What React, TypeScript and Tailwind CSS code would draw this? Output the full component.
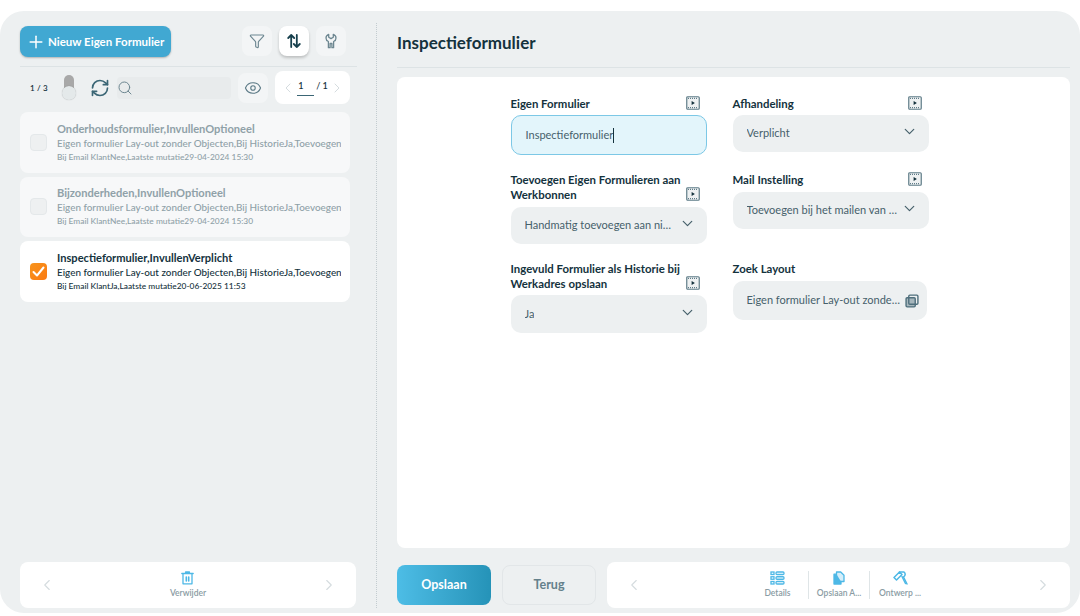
import { ChevronDown, ChevronLeft, ChevronRight, Eye, Funnel, Plus, RefreshCw, Search } from 'lucide-react'

const cards = [
  { title: 'Onderhoudsformulier,InvullenOptioneel', sub: 'Eigen formulier Lay-out zonder Objecten,Bij HistorieJa,Toevoegen Werkbonnen', meta: 'Bij Email KlantNee,Laatste mutatie29-04-2024 15:30', active: false },
  { title: 'Bijzonderheden,InvullenOptioneel', sub: 'Eigen formulier Lay-out zonder Objecten,Bij HistorieJa,Toevoegen Werkbonnen', meta: 'Bij Email KlantNee,Laatste mutatie29-04-2024 15:30', active: false },
  { title: 'Inspectieformulier,InvullenVerplicht', sub: 'Eigen formulier Lay-out zonder Objecten,Bij HistorieJa,Toevoegen Werkbonnen', meta: 'Bij Email KlantJa,Laatste mutatie20-06-2025 11:53', active: true },
]

function FilmIcon() {
  return (
    <svg width="14" height="14" viewBox="0 0 14 14" fill="none" className="shrink-0 text-[#5f7c88]">
      <rect x="0.75" y="0.75" width="12.5" height="12.5" rx="1" fill="#eef1f2" stroke="currentColor" strokeWidth="1.2" />
      <path d="M2 2.4h10M2 11.6h10" stroke="currentColor" strokeWidth="1.1" strokeDasharray="1 1" />
      <path d="M5.6 5.1 8.9 7 5.6 8.9Z" fill="#14323d" />
    </svg>
  )
}

function SortIcon() {
  return (
    <svg width="16" height="16" viewBox="0 0 16 16" fill="none" stroke="#17404d" strokeWidth="1.8" strokeLinecap="round" strokeLinejoin="round">
      <path d="M5.2 14V2M2.2 5l3-3 3 3" />
      <path d="M10.8 2v12M7.8 11l3 3 3-3" />
    </svg>
  )
}

function WrenchIcon() {
  return (
    <svg width="12" height="16" viewBox="0 0 12 16" fill="none" stroke="#6d8791" strokeWidth="1.3" strokeLinecap="round" strokeLinejoin="round">
      <path d="M3.700 1.300C2 1.900 1 3.300 1 5c0 1.600.9 2.900 2.400 3.500v6.200h1.700v-4.200h1.800v4.200h1.700V8.500C10.100 7.900 11 6.600 11 5c0-1.700-1-3.100-2.700-3.700v2.900L6 5.600 3.700 4.200Z" />
    </svg>
  )
}

function FieldLabel({ lines, icon = true }: { lines: string[]; icon?: boolean }) {
  return (
    <div className="flex items-end justify-between pr-[7px]">
      <div className="text-[11.4px] leading-[15px] font-bold text-[#14323d]">
        {lines.map((line) => (
          <div key={line}>{line}</div>
        ))}
      </div>
      {icon && <div className="mb-px"><FilmIcon /></div>}
    </div>
  )
}

function SelectBox({ value, h = 'h-[37px]', className = '' }: { value: string; h?: string; className?: string }) {
  return (
    <div className={`flex items-center justify-between rounded-[10px] bg-[#edf0f1] pl-[14px] pr-[11px] ${h} ${className}`}>
      <span className="truncate text-[11px] text-[#46606b]">{value}</span>
      <ChevronDown className="mb-[4px] ml-[2px] h-[17px] w-[17px] shrink-0 text-[#46606b]" strokeWidth={1.7} />
    </div>
  )
}

function BarAction({ label, icon, border }: { label: string; icon: React.ReactNode; border?: boolean }) {
  return (
    <div className={`flex h-[28px] w-[61px] flex-col items-center justify-between ${border ? 'border-l border-[#dfe5e7]' : ''}`}>
      {icon}
      <span className="text-[8.5px] leading-[11px] font-semibold text-[#8a9ca3]">{label}</span>
    </div>
  )
}

export default function App() {
  return (
    <div className="h-[616px] w-[1080px] overflow-hidden bg-white pt-[11px] pb-[3px] font-['Lato',sans-serif]">
      <div className="flex h-[602px] rounded-[24px] bg-[#edf0f1]">
        {/* left column */}
        <aside className="mt-[12px] mb-[5px] flex w-[377px] shrink-0 flex-col border-r border-dotted border-[#c3ccd0] pr-[19px] pl-5">
          <div className="mt-[3px] flex h-[31px] items-center justify-between pr-[11px]">
            <button className="flex h-[31px] w-[151px] items-center gap-[2px] rounded-lg bg-[#41a8d2] pl-[6px] text-[11.5px] font-bold text-white shadow-[0_1px_2px_rgba(0,0,0,0.25)]">
              <Plus className="h-[20px] w-[20px]" strokeWidth={1.8} />
              Nieuw Eigen Formulier
            </button>
            <div className="-mt-[2px] flex gap-[7px]">
              <div className="flex h-[30px] w-[30px] items-center justify-center rounded-lg bg-[#f3f5f6]">
                <Funnel className="h-[16px] w-[16px] text-[#6d8791]" strokeWidth={1.7} />
              </div>
              <div className="flex h-[30px] w-[30px] items-center justify-center rounded-lg bg-white shadow-[0_2px_3px_rgba(0,0,0,0.2)]">
                <SortIcon />
              </div>
              <div className="flex h-[30px] w-[30px] items-center justify-center rounded-lg bg-[#f3f5f6]">
                <WrenchIcon />
              </div>
            </div>
          </div>

          <div className="mt-[9px] border-t border-[#dde3e5]" />

          <div className="mt-[4px] flex h-[33px] items-center pr-[7px]">
            <span className="ml-[10px] w-[32px] text-[8px] font-semibold tracking-wide text-[#14323d]">1 / 3</span>
            <div className="flex w-[14px] flex-col items-center">
              <div className="h-[14px] w-[10px] rounded-t-full bg-[#a8a8a8]" />
              <div className="-mt-[3px] h-[14px] w-[14px] rounded-full bg-[#e4e9ea] shadow-[0_0_1px_rgba(0,0,0,0.3)]" />
            </div>
            <RefreshCw className="ml-[14px] h-[20px] w-[20px] text-[#3b6675]" strokeWidth={2} />
            <div className="ml-[7px] flex h-[22px] w-[114px] items-center rounded bg-[#e8ebec]">
              <Search className="h-[16px] w-[16px] text-[#6d8791]" strokeWidth={1.5} />
            </div>
            <div className="ml-[7px] flex h-[30px] w-[30px] items-center justify-center rounded-lg bg-[#f3f5f6]">
              <Eye className="h-[18px] w-[18px] text-[#5c7a86]" strokeWidth={1.5} />
            </div>
            <div className="ml-[7px] flex h-[33px] w-[75px] items-center justify-between rounded-lg bg-white px-[5px]">
              <ChevronLeft className="h-[16px] w-[16px] text-[#d5dcdf]" strokeWidth={1.5} />
              <span className="flex items-center gap-[2px] text-[9px] font-semibold text-[#14323d]">
                <span className="w-[17px] border-b border-[#3b6675] pb-[2px] pl-[1px]">1</span>
                <span className="-mt-1">/ 1</span>
              </span>
              <ChevronRight className="h-[16px] w-[16px] text-[#d5dcdf]" strokeWidth={1.5} />
            </div>
          </div>

          <div className="mt-[8px] flex flex-col gap-[4px] pr-[7px]">
            {cards.map((card) => (
              <div key={card.title} className={`flex h-[60.5px] items-center rounded-lg pr-[9px] pl-[10px] ${card.active ? 'bg-white' : 'bg-[#f7f8f9]'}`}>
                {card.active ? (
                  <div className="flex h-[17px] w-[17px] shrink-0 items-center justify-center rounded bg-gradient-to-br from-[#f7941d] to-[#fb7a12]">
                    <svg width="13" height="13" viewBox="0 0 13 13" fill="none" stroke="#fff" strokeWidth="2" strokeLinecap="round" strokeLinejoin="round">
                      <path d="M1.5 7 5 10.500 11.500 2.500" />
                    </svg>
                  </div>
                ) : (
                  <div className="h-[17px] w-[17px] shrink-0 rounded border border-[#e4e8ea] bg-[#eef0f1]" />
                )}
                <div className={`ml-[10px] min-w-0 flex-1 ${card.active ? 'text-[#14323d]' : 'text-[#8fa1a8]'}`}>
                  <div className="truncate text-[11.1px] leading-[15px] font-bold">{card.title}</div>
                  <div className="overflow-hidden text-[9.9px] leading-[15px] font-medium whitespace-nowrap">{card.sub}</div>
                  <div className="truncate text-[8.4px] leading-[13px] font-medium">{card.meta}</div>
                </div>
              </div>
            ))}
          </div>

          <div className="mt-auto mr-px flex h-[46px] items-center justify-between rounded-lg bg-white px-[18px]">
            <ChevronLeft className="h-[18px] w-[18px] text-[#d5dcdf]" strokeWidth={1.5} />
            <div className="flex flex-col items-center">
              <svg width="13" height="14" viewBox="0 0 13 14" fill="none" stroke="#4db8e6" strokeWidth="1.300" strokeLinecap="round" strokeLinejoin="round">
                <path d="M.8 2.500h11.400M4.600 2.300V1h3.800v1.300M2 2.800v10h9v-10" />
                <path d="M5.300 6v4M7.700 6v4" strokeWidth="1.600" />
              </svg>
              <span className="mt-[3px] text-[8.5px] leading-[11px] font-semibold text-[#8a9ca3]">Verwijder</span>
            </div>
            <ChevronRight className="h-[18px] w-[18px] text-[#d5dcdf]" strokeWidth={1.5} />
          </div>
        </aside>

        {/* right column */}
        <main className="flex min-w-0 flex-1 flex-col pt-[21px] pr-[10px] pl-[20px]">
          <h1 className="text-[17px] leading-[22px] font-bold text-[#14323d]">Inspectieformulier</h1>
          <div className="mt-[13px] border-t border-[#dde3e5]" />

          <div className="mt-[9px] flex h-[471px] justify-center gap-[26px] rounded-lg bg-white pt-[19px] pr-[28px]">
            <div className="w-[196px]">
              <FieldLabel lines={['Eigen Formulier']} />
              <div className="mt-[4px] flex h-[40px] items-center rounded-[10px] border border-[#7cc8e6] bg-[#e3f5fb] pl-[14px] text-[11px] text-[#46606b]">
                Inspectieformulier<span className="h-[15px] w-px bg-[#14323d]" />
              </div>
              <div className="mt-[17px]">
                <FieldLabel lines={['Toevoegen Eigen Formulieren aan', 'Werkbonnen']} />
              </div>
              <SelectBox value="Handmatig toevoegen aan nieuwe werkbon" className="mt-[5px]" />
              <div className="mt-[17px]">
                <FieldLabel lines={['Ingevuld Formulier als Historie bij', 'Werkadres opslaan']} />
              </div>
              <SelectBox value="Ja" h="h-[38px]" className="mt-[4px]" />
            </div>

            <div className="w-[196px]">
              <FieldLabel lines={['Afhandeling']} />
              <SelectBox value="Verplicht" className="mt-[4px]" />
              <div className="mt-[20px]">
                <FieldLabel lines={['Mail Instelling']} />
              </div>
              <SelectBox value="Toevoegen bij het mailen van de werkbon" className="mt-[5px]" />
              <div className="mt-[32px]">
                <FieldLabel lines={['Zoek Layout']} icon={false} />
              </div>
              <div className="mt-[5px] flex h-[39px] w-[194px] items-center justify-between rounded-[10px] bg-[#edf0f1] pr-[8px] pl-[14px]">
                <span className="truncate text-[11px] text-[#46606b]">Eigen formulier Lay-out zonder Objecten</span>
                <svg width="14" height="14" viewBox="0 0 13 13" fill="none" stroke="#4f6f7c" strokeWidth="1.300" className="ml-1 shrink-0">
                  <rect x="3.500" y="1" width="8.500" height="8.500" rx="1" />
                  <rect x="1" y="3.500" width="8.500" height="8.500" rx="1" fill="#4f6f7c" fillOpacity="0.45" />
                </svg>
              </div>
            </div>
          </div>

          <div className="mt-[14px] flex items-center">
            <button className="h-[40px] w-[94px] rounded-lg bg-gradient-to-r from-[#4dbde6] to-[#2593b8] text-[12.5px] font-bold text-white">Opslaan</button>
            <button className="ml-[11px] h-[40px] w-[94px] rounded-lg border border-[#e2e6e8] bg-[#edf0f1] text-[12.5px] font-bold text-[#64808b]">Terug</button>
            <div className="ml-[11px] flex h-[46px] flex-1 items-center rounded-lg bg-white px-[18px]">
              <ChevronLeft className="h-[18px] w-[18px] text-[#d5dcdf]" strokeWidth={1.5} />
              <div className="ml-[104px] flex">
                <BarAction
                  label="Details"
                  icon={
                    <svg width="15" height="14" viewBox="0 0 15 14" fill="none" stroke="#4db8e6" strokeWidth="1.300">
                      <rect x="1" y="1" width="3" height="2.500" />
                      <rect x="1" y="5.750" width="3" height="2.500" />
                      <rect x="1" y="10.500" width="3" height="2.500" />
                      <rect x="6" y="1" width="8" height="2.500" rx="1" />
                      <rect x="6" y="5.750" width="8" height="2.500" rx="1" />
                      <rect x="6" y="10.500" width="8" height="2.500" rx="1" />
                    </svg>
                  }
                />
                <BarAction
                  label="Opslaan A..."
                  border
                  icon={
                    <svg width="12" height="14" viewBox="0 0 12 14" fill="none" stroke="#4db8e6" strokeWidth="1.300" strokeLinejoin="round">
                      <path d="M3.500 1h4.200L11 4.300v6.200H3.500Z" fill="#d4eefa" />
                      <path d="M3.500 3.200H1v9.800h7v-2.500" fill="#4db8e6" />
                    </svg>
                  }
                />
                <BarAction
                  label="Ontwerp ..."
                  border
                  icon={
                    <svg width="15" height="14" viewBox="0 0 15 14" fill="none" stroke="#4db8e6" strokeWidth="1.500" strokeLinecap="round" strokeLinejoin="round">
                      <path d="M1 6.500 6.500 1l2.500 2.500L3.500 9Z" />
                      <path d="M6.500 1h4.500a3 3 0 0 1 .5 4l-1 1L14 13" />
                      <path d="M9 5.500 12.500 12.500" />
                    </svg>
                  }
                />
              </div>
              <ChevronRight className="ml-auto h-[18px] w-[18px] text-[#d5dcdf]" strokeWidth={1.5} />
            </div>
          </div>
        </main>
      </div>
    </div>
  )
}
